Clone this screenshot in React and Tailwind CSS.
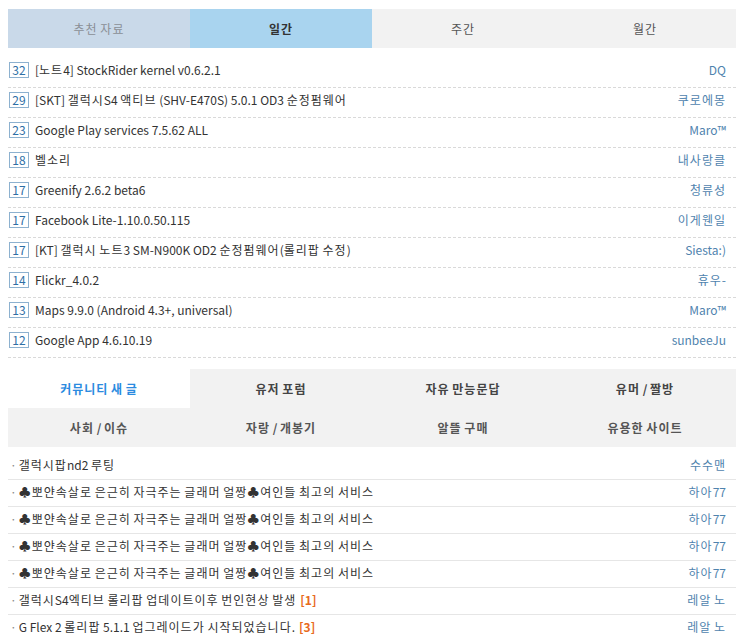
import React from 'react';

const TOP_TABS = [
  { label: '추천 자료', cls: 'bg-[#c9d9e9] text-[#8a8f96]' },
  { label: '일간', cls: 'bg-[#a9d4ef] text-[#333] font-bold' },
  { label: '주간', cls: 'bg-[#f2f2f2] text-[#555]' },
  { label: '월간', cls: 'bg-[#f2f2f2] text-[#555]' },
];

const TOP_ITEMS = [
  { n: 32, title: '[노트4] StockRider kernel v0.6.2.1', author: 'DQ' },
  { n: 29, title: '[SKT] 갤럭시S4 액티브 (SHV-E470S) 5.0.1 OD3 순정펌웨어', author: '쿠로에몽' },
  { n: 23, title: 'Google Play services 7.5.62 ALL', author: 'Maro™' },
  { n: 18, title: '벨소리', author: '내사랑클' },
  { n: 17, title: 'Greenify 2.6.2 beta6', author: '청류성' },
  { n: 17, title: 'Facebook Lite-1.10.0.50.115', author: '이게웬일' },
  { n: 17, title: '[KT] 갤럭시 노트3 SM-N900K OD2 순정펌웨어(롤리팝 수정)', author: 'Siesta:)' },
  { n: 14, title: 'Flickr_4.0.2', author: '휴우-' },
  { n: 13, title: 'Maps 9.9.0 (Android 4.3+, universal)', author: 'Maro™' },
  { n: 12, title: 'Google App 4.6.10.19', author: 'sunbeeJu' },
];

const COMMUNITY_TABS = ['커뮤니티 새 글', '유저 포럼', '자유 만능문답', '유머 / 짤방'];
const SUB_TABS = ['사회 / 이슈', '자랑 / 개봉기', '알뜰 구매', '유용한 사이트'];

const SPAM = '♣뽀얀속살로 은근히 자극주는 글래머 얼짱♣여인들 최고의 서비스';

const COMMUNITY_ITEMS = [
  { title: '갤럭시팝nd2 루팅', author: '수수맨' },
  { title: SPAM, author: '하아77' },
  { title: SPAM, author: '하아77' },
  { title: SPAM, author: '하아77' },
  { title: SPAM, author: '하아77' },
  { title: '갤럭시S4엑티브 롤리팝 업데이트이후 번인현상 발생', author: '레알 노', reply: 1 },
  { title: 'G Flex 2 롤리팝 5.1.1 업그레이드가 시작되었습니다.', author: '레알 노', reply: 3 },
];

// Hangul in the original renders wider than Noto's, so space those runs out a bit
function Ko({ text }) {
  return (
    <span>
      {text.split(/([\uAC00-\uD7A3♣]+)/).map((part, i) =>
        /[\uAC00-\uD7A3♣]/.test(part) ? (
          <span key={i} className="tracking-[1px]">
            {part}
          </span>
        ) : (
          part
        )
      )}
    </span>
  );
}

export default function App() {
  return (
    <div
      className="w-[740px] h-[641px] overflow-hidden bg-white text-[12px] text-[#333]"
      style={{ fontFamily: '"Noto Sans CJK KR", "Noto Sans", sans-serif' }}
    >
      <div className="pl-[8px] pr-[4px] pt-[9px]">
        {/* Ranking tabs */}
        <div className="grid grid-cols-4 h-[39px]">
          {TOP_TABS.map((t) => (
            <div key={t.label} className={`flex items-center justify-center ${t.cls}`}>
              <Ko text={t.label} />
            </div>
          ))}
        </div>

        {/* Ranking list */}
        <ul className="mt-[10px]">
          {TOP_ITEMS.map((it, i) => (
            <li
              key={i}
              className="h-[30px] flex items-start pt-[4px] border-b border-dashed border-[#d9d9d9]"
            >
              <span className="w-[20px] h-[16px] ml-[1px] flex items-center justify-center border border-[#8db1cf] text-[#2f6fa6] text-[12px] leading-none">
                {it.n}
              </span>
              <span className="ml-[6px] leading-[16px] flex-1 truncate">
                <Ko text={it.title} />
              </span>
              <span className="mr-[10px] leading-[16px] text-[#4f83ae]">
                <Ko text={it.author} />
              </span>
            </li>
          ))}
        </ul>

        {/* Community tabs */}
        <div className="mt-[11px] grid grid-cols-4 h-[39px]">
          {COMMUNITY_TABS.map((t, i) => (
            <div
              key={t}
              className={`flex items-center justify-center font-bold ${
                i === 0 ? 'bg-white text-[#2b8be0]' : 'bg-[#f2f2f2] text-[#444]'
              }`}
            >
              <Ko text={t} />
            </div>
          ))}
        </div>
        <div className="grid grid-cols-4 h-[39px] bg-[#f2f2f2]">
          {SUB_TABS.map((t) => (
            <div key={t} className="flex items-center justify-center font-bold text-[#555]">
              <Ko text={t} />
            </div>
          ))}
        </div>

        {/* Community list */}
        <ul className="mt-[6px]">
          {COMMUNITY_ITEMS.map((it, i) => (
            <li
              key={i}
              className="h-[27px] flex items-center border-b border-[#e6e6e6] pb-[2px]"
            >
              <span className="ml-[2px] text-[#888]">·</span>
              <span className="ml-[2px] flex-1 truncate">
                <Ko text={it.title} />
                {it.reply && (
                  <span className="ml-[4px] font-bold text-[#e86a1c]">[{it.reply}]</span>
                )}
              </span>
              <span className="mr-[10px] text-[#4f83ae]">
                <Ko text={it.author} />
              </span>
            </li>
          ))}
        </ul>
      </div>
    </div>
  );
}
